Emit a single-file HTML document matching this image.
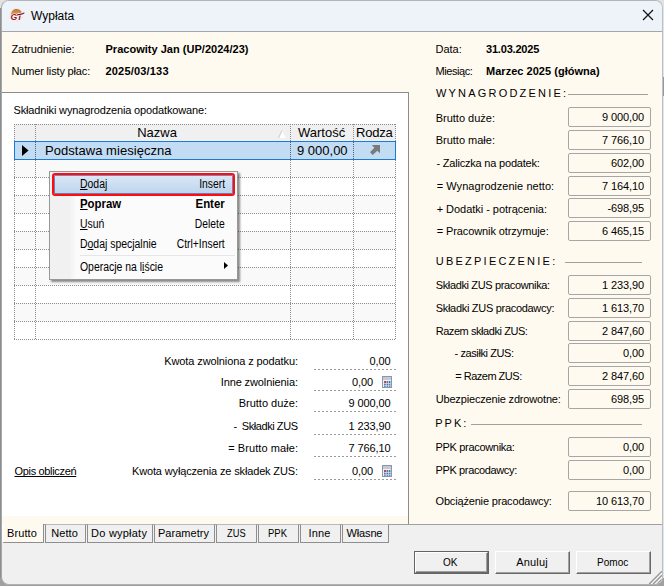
<!DOCTYPE html>
<html lang="pl">
<head>
<meta charset="utf-8">
<title>Wypłata</title>
<style>
*{box-sizing:border-box;margin:0;padding:0}
html,body{width:664px;height:586px;overflow:hidden}
body{position:relative;background:#a0a0a0;font-family:"Liberation Sans",sans-serif;font-size:11px;color:#000}
.abs{position:absolute}
#win{left:1px;top:0;width:662px;height:585px;background:#f0f0f0;border:1px solid #a8a8a8;border-top-color:#b4b4b4;border-right-color:#bcc0c5;border-bottom-color:#b0b0b0;border-radius:8px;overflow:hidden}
#c{left:-2px;top:-1px;width:664px;height:586px}
.t{position:absolute;white-space:pre;line-height:13px;font-size:11px;letter-spacing:-0.1px}
.b{font-weight:bold;letter-spacing:0}
.r{text-align:right}
.gf{font-size:13px;line-height:15px;position:absolute;white-space:nowrap}
.hl{position:absolute;left:14px;width:382px;height:1px;background-image:repeating-linear-gradient(90deg,#8c8c8c 0 1px,transparent 1px 2px)}
.vl{position:absolute;top:124px;width:1px;height:216px;background-image:repeating-linear-gradient(180deg,#8c8c8c 0 1px,transparent 1px 2px)}
.vf{position:absolute;left:314px;width:82px;height:1px;background-image:repeating-linear-gradient(90deg,#9a9a9a 0 2px,transparent 2px 4px)}
.fld{position:absolute;left:568px;width:83px;height:20px;border:1px solid #a6a6a6;border-radius:2px;background:#fffaef;font-size:11px;line-height:18px;text-align:right;padding-right:6px;white-space:nowrap;letter-spacing:-0.1px}
.sep{position:absolute;height:1px;background:#a0a0a0}
.tab{position:absolute;top:524px;height:19px;border:1px solid #8e8e8e;border-top-color:#b9b9b9;background:#f0f0f0;font-size:11px;line-height:16px;text-align:center;white-space:nowrap;letter-spacing:-0.1px}
.btn{position:absolute;top:551px;width:75px;height:23px;background:#f0f0f0;border-top:1px solid #fff;border-left:1px solid #fff;border-right:1px solid #696969;border-bottom:1px solid #696969;box-shadow:inset -1px -1px 0 #a0a0a0;font-size:11px;line-height:20px;text-align:center;letter-spacing:-0.1px}
#menu{left:49px;top:171px;width:189px;height:109px;background:#fbfbfb;border:1px solid #979797;box-shadow:2px 2px 2px rgba(0,0,0,.45)}
.mi{position:absolute;left:30px;font-size:12px;line-height:14px;white-space:nowrap;transform:scaleX(.87);transform-origin:0 50%}
.ms{position:absolute;right:12px;font-size:12px;line-height:14px;white-space:nowrap;text-align:right;transform:scaleX(.86);transform-origin:100% 50%}
.mi.b,.ms.b{transform:scaleX(.95)}
u{text-decoration:underline;text-underline-offset:1px;text-decoration-skip-ink:none}
</style>
</head>
<body>
<div class="abs" style="left:0;top:0;width:664px;height:14px;background:#e2e2e2"></div>
<div class="abs" style="left:0;top:8px;width:2px;height:570px;background:#8c8e92"></div>
<div class="abs" style="left:662px;top:8px;width:2px;height:570px;background:#dfe5ec"></div>
<div class="abs" style="left:662px;top:77px;width:2px;height:19px;background:#8e9aa8"></div>
<div class="abs" id="win"><div class="abs" id="c">

<div class="abs" style="left:2px;top:1px;width:660px;height:30px;background:#eef3f9"></div>
<div class="abs" style="left:2px;top:31px;width:660px;height:1px;background:#a6a6a6"></div>
<svg class="abs" style="left:8px;top:5px" width="19" height="19" viewBox="0 0 19 19">
<defs><linearGradient id="og" x1="0" y1="0" x2="0" y2="1"><stop offset="0" stop-color="#c2742f"/><stop offset="1" stop-color="#dfa268"/></linearGradient></defs>
<circle cx="8.2" cy="9.9" r="7.1" fill="#ebe6e1" opacity=".7"/>
<path d="M2.9 10.7 C2.8 6.2 5.4 3.9 8.3 3.9 C11 3.9 13.3 5.4 13.8 7.6 Z" fill="url(#og)"/>
<g font-family="Liberation Sans, sans-serif" font-size="8.6" font-weight="bold" font-style="italic" letter-spacing="-0.3">
<text x="2.6" y="14.9" fill="none" stroke="#fff" stroke-width="1.2" stroke-linejoin="round">GT</text>
<text x="2.6" y="14.9" fill="#8a1020">GT</text></g>
<path d="M9.6 9.8 L14.2 8.9 L16 7.9" stroke="#fff" stroke-width="2.2" fill="none" stroke-linecap="round"/>
<path d="M9.4 9.9 L14.2 8.9 L16 7.9" stroke="#8a1020" stroke-width="1.1" fill="none" stroke-linecap="round"/>
</svg>
<div class="abs" style="left:31px;top:9px;font-size:12px;line-height:14px;white-space:nowrap">Wypłata</div>
<svg class="abs" style="left:642px;top:9px" width="12" height="12" viewBox="0 0 12 12"><path d="M1 1 L11 11 M11 1 L1 11" stroke="#111" stroke-width="1.2" fill="none"/></svg>
<div class="abs" style="left:2px;top:32px;width:660px;height:492px;background:#fffaef"></div>
<div class="abs" style="left:662px;top:32px;width:1px;height:493px;background:#8c8c8c"></div>
<div class="abs" style="left:2px;top:92px;width:407px;height:432px;border-top:1px solid #8c8c8c;border-right:1px solid #8c8c8c"><div class="abs" style="left:0;top:0;width:406px;height:423px;background:#fff"></div></div>
<div class="abs" style="left:2px;top:524px;width:660px;height:1px;background:#a0a0a0"></div>
<div class="t" style="left:11.5px;top:43px;letter-spacing:-0.102px;">Zatrudnienie:</div>
<div class="t b" style="left:105.5px;top:43px;letter-spacing:0.021px;">Pracowity Jan (UP/2024/23)</div>
<div class="t" style="left:11.5px;top:65px;letter-spacing:-0.162px;">Numer listy płac:</div>
<div class="t b" style="left:105.5px;top:65px;letter-spacing:0.183px;">2025/03/133</div>
<div class="t" style="left:435.5px;top:43px;letter-spacing:-0.024px;">Data:</div>
<div class="t b" style="left:486px;top:43px;letter-spacing:-0.196px;">31.03.2025</div>
<div class="t" style="left:435.5px;top:65px;letter-spacing:-0.421px;">Miesiąc:</div>
<div class="t b" style="left:486px;top:65px;letter-spacing:0.027px;">Marzec 2025 (główna)</div>
<div class="t" style="left:13.5px;top:104px;letter-spacing:-0.146px;">Składniki wynagrodzenia opodatkowane:</div>
<div class="abs" style="left:14px;top:124px;width:382px;height:17px;background:#f0f0f0"></div>
<div class="abs" style="left:14px;top:159px;width:382px;height:18px;background:#f9f9f9"></div>
<div class="abs" style="left:14px;top:195px;width:382px;height:18px;background:#f9f9f9"></div>
<div class="abs" style="left:14px;top:231px;width:382px;height:18px;background:#f9f9f9"></div>
<div class="abs" style="left:14px;top:267px;width:382px;height:18px;background:#f9f9f9"></div>
<div class="abs" style="left:14px;top:303px;width:382px;height:18px;background:#f9f9f9"></div>
<div class="hl" style="top:124px"></div>
<div class="hl" style="top:177px"></div>
<div class="hl" style="top:195px"></div>
<div class="hl" style="top:213px"></div>
<div class="hl" style="top:231px"></div>
<div class="hl" style="top:249px"></div>
<div class="hl" style="top:267px"></div>
<div class="hl" style="top:285px"></div>
<div class="hl" style="top:303px"></div>
<div class="hl" style="top:321px"></div>
<div class="hl" style="top:339px"></div>
<div class="vl" style="left:14px"></div>
<div class="vl" style="left:35px"></div>
<div class="vl" style="left:290px"></div>
<div class="vl" style="left:353px"></div>
<div class="vl" style="left:395px"></div>
<div class="abs" style="left:14px;top:141px;width:382px;height:19px;background:#c2dcf4;border:1px solid #1a7ad4"></div>
<div class="abs" style="left:35px;top:142px;width:1px;height:17px;background-image:repeating-linear-gradient(180deg,#55606c 0 1px,transparent 1px 2px)"></div>
<div class="abs" style="left:290px;top:142px;width:1px;height:17px;background-image:repeating-linear-gradient(180deg,#55606c 0 1px,transparent 1px 2px)"></div>
<div class="abs" style="left:353px;top:142px;width:1px;height:17px;background-image:repeating-linear-gradient(180deg,#55606c 0 1px,transparent 1px 2px)"></div>
<div class="gf" style="left:36px;width:242px;top:125px;text-align:center">Nazwa</div>
<svg class="abs" style="left:278px;top:130px" width="8" height="8" viewBox="0 0 8 8"><path d="M0.5 8 L4 0.5 L7.5 8 Z" fill="#fff"/><path d="M0.5 8 L4 0.5" stroke="#c8c8c8" stroke-width="1" fill="none"/></svg>
<div class="gf" style="left:298px;top:125px;">Wartość</div>
<div class="gf" style="left:356px;top:125px;letter-spacing:-0.2px">Rodza</div>
<svg class="abs" style="left:22px;top:145px" width="7" height="11" viewBox="0 0 7 11"><path d="M0 0 L6.5 5.5 L0 11 Z" fill="#000"/></svg>
<div class="gf" style="left:45px;top:143px;letter-spacing:0.043px;">Podstawa miesięczna</div>
<div class="gf" style="left:297px;top:143px;">9 000,00</div>
<svg class="abs" style="left:370px;top:145px" width="10" height="10" viewBox="0 0 11 11"><path d="M2 0 H11 V9 L8 6.2 L3 11 L0 8 L4.8 3 Z" fill="#7a7a7a"/></svg>
<div class="t" style="left:164.3px;top:355px;letter-spacing:-0.107px;">Kwota zwolniona z podatku:</div>
<div class="t r" style="right:273.5px;top:355px;">0,00</div>
<div class="vf" style="top:369px"></div>
<div class="t" style="left:220.7px;top:376px;letter-spacing:-0.106px;">Inne zwolnienia:</div>
<div class="t r" style="right:291px;top:376px;">0,00</div>
<div class="vf" style="top:390px"></div>
<svg class="abs" style="left:382px;top:376px" width="10" height="12" viewBox="0 0 10 12"><rect x="0.5" y="0.5" width="9" height="11" fill="#eef1f5" stroke="#8a97a6"/><rect x="1" y="1" width="8" height="3" fill="#c3cad3"/><g fill="#4a78b4"><rect x="2" y="5" width="2" height="2" fill="#c8453a"/><rect x="4.5" y="5" width="1.7" height="2"/><rect x="6.8" y="5" width="1.7" height="2"/><rect x="2" y="7.6" width="1.7" height="1.6"/><rect x="4.5" y="7.6" width="1.7" height="1.6"/><rect x="6.8" y="7.6" width="1.7" height="1.6"/><rect x="2" y="9.6" width="1.7" height="1.2"/><rect x="4.5" y="9.6" width="1.7" height="1.2"/><rect x="6.8" y="9.6" width="1.7" height="1.2"/></g></svg>
<div class="t" style="left:238.7px;top:397px;letter-spacing:-0.003px;">Brutto duże:</div>
<div class="t r" style="right:273.5px;top:397px;">9 000,00</div>
<div class="vf" style="top:411px"></div>
<div class="t" style="left:233.4px;top:420px;letter-spacing:-0.438px;">-&nbsp; Składki ZUS</div>
<div class="t r" style="right:273.5px;top:420px;">1 233,90</div>
<div class="vf" style="top:434px"></div>
<div class="t" style="left:228.2px;top:442px;letter-spacing:0.077px;">= Brutto małe:</div>
<div class="t r" style="right:273.5px;top:442px;">7 766,10</div>
<div class="vf" style="top:456px"></div>
<div class="t" style="left:132px;top:465px;letter-spacing:-0.148px;">Kwota wyłączenia ze składek ZUS:</div>
<div class="t r" style="right:291px;top:465px;">0,00</div>
<div class="vf" style="top:479px"></div>
<svg class="abs" style="left:382px;top:465px" width="10" height="12" viewBox="0 0 10 12"><rect x="0.5" y="0.5" width="9" height="11" fill="#eef1f5" stroke="#8a97a6"/><rect x="1" y="1" width="8" height="3" fill="#c3cad3"/><g fill="#4a78b4"><rect x="2" y="5" width="2" height="2" fill="#c8453a"/><rect x="4.5" y="5" width="1.7" height="2"/><rect x="6.8" y="5" width="1.7" height="2"/><rect x="2" y="7.6" width="1.7" height="1.6"/><rect x="4.5" y="7.6" width="1.7" height="1.6"/><rect x="6.8" y="7.6" width="1.7" height="1.6"/><rect x="2" y="9.6" width="1.7" height="1.2"/><rect x="4.5" y="9.6" width="1.7" height="1.2"/><rect x="6.8" y="9.6" width="1.7" height="1.2"/></g></svg>
<div class="t" style="left:14.5px;top:465px;text-decoration:underline;text-decoration-skip-ink:none;letter-spacing:-0.329px;">Opis obliczeń</div>
<div class="t" style="left:436px;top:87px;letter-spacing:2.196px;">WYNAGRODZENIE:</div>
<div class="sep" style="left:568px;top:94px;width:80px"></div>
<div class="t" style="left:435.7px;top:112px;letter-spacing:-0.003px;">Brutto duże:</div>
<div class="fld" style="top:107px">9 000,00</div>
<div class="t" style="left:435.7px;top:134px;letter-spacing:-0.001px;">Brutto małe:</div>
<div class="fld" style="top:130px">7 766,10</div>
<div class="t" style="left:436.4px;top:157px;letter-spacing:-0.196px;">- Zaliczka na podatek:</div>
<div class="fld" style="top:153px">602,00</div>
<div class="t" style="left:436.7px;top:180px;letter-spacing:0.052px;">= Wynagrodzenie netto:</div>
<div class="fld" style="top:176px">7 164,10</div>
<div class="t" style="left:436.7px;top:203px;letter-spacing:-0.031px;">+ Dodatki - potrącenia:</div>
<div class="fld" style="top:198px">-698,95</div>
<div class="t" style="left:436.7px;top:225px;letter-spacing:-0.096px;">= Pracownik otrzymuje:</div>
<div class="fld" style="top:221px">6 465,15</div>
<div class="t" style="left:435.8px;top:255px;letter-spacing:2.225px;">UBEZPIECZENIE:</div>
<div class="sep" style="left:565px;top:262px;width:77px"></div>
<div class="t" style="left:435.7px;top:279px;letter-spacing:-0.354px;">Składki ZUS pracownika:</div>
<div class="fld" style="top:275px">1 233,90</div>
<div class="t" style="left:435.7px;top:302px;letter-spacing:-0.297px;">Składki ZUS pracodawcy:</div>
<div class="fld" style="top:298px">1 613,70</div>
<div class="t" style="left:435.7px;top:325px;letter-spacing:-0.438px;">Razem składki ZUS:</div>
<div class="fld" style="top:321px">2 847,60</div>
<div class="t" style="left:454.6px;top:347px;letter-spacing:-0.414px;">- zasiłki ZUS:</div>
<div class="fld" style="top:343px">0,00</div>
<div class="t" style="left:455.2px;top:370px;letter-spacing:-0.494px;">= Razem ZUS:</div>
<div class="fld" style="top:366px">2 847,60</div>
<div class="t" style="left:435.7px;top:393px;letter-spacing:-0.167px;">Ubezpieczenie zdrowotne:</div>
<div class="fld" style="top:389px">698,95</div>
<div class="t" style="left:435.3px;top:417px;letter-spacing:1.974px;">PPK:</div>
<div class="sep" style="left:471px;top:424px;width:171px"></div>
<div class="t" style="left:435.5px;top:441px;letter-spacing:-0.319px;">PPK pracownika:</div>
<div class="fld" style="top:437px">0,00</div>
<div class="t" style="left:435.5px;top:464px;letter-spacing:-0.366px;">PPK pracodawcy:</div>
<div class="fld" style="top:460px">0,00</div>
<div class="t" style="left:435.5px;top:495px;letter-spacing:-0.169px;">Obciążenie pracodawcy:</div>
<div class="fld" style="top:491px">10 613,70</div>
<div class="tab" style="left:2px;width:42px;top:524px;height:19px;background:#fffaef;border-top:none;border-left:2px solid #fff;line-height:18px;padding-right:3px"><span style="letter-spacing:0.088px;margin-right:-0.088px">Brutto</span></div>
<div class="tab" style="left:45px;width:41px;padding-right:2px"><span style="letter-spacing:0.051px;margin-right:-0.051px">Netto</span></div>
<div class="tab" style="left:87px;width:66px;padding-right:2px"><span style="letter-spacing:0.223px;margin-right:-0.223px">Do wypłaty</span></div>
<div class="tab" style="left:154px;width:61px;padding-right:2px"><span style="letter-spacing:0.031px;margin-right:-0.031px">Parametry</span></div>
<div class="tab" style="left:216px;width:41px;padding-right:0px"><span style="display:inline-block;width:18.6px"><span style="display:inline-block;transform:scaleX(0.845);transform-origin:0 50%;letter-spacing:0">ZUS</span></span></div>
<div class="tab" style="left:258px;width:41px;padding-right:2px"><span style="display:inline-block;width:19px"><span style="display:inline-block;transform:scaleX(0.863);transform-origin:0 50%;letter-spacing:0">PPK</span></span></div>
<div class="tab" style="left:300px;width:41px;padding-right:2px"><span style="letter-spacing:0.193px;margin-right:-0.193px">Inne</span></div>
<div class="tab" style="left:342px;width:47px;padding-right:2px"><span style="letter-spacing:-0.138px;margin-right:0.138px">Własne</span></div>
<div class="abs" style="left:414px;top:551px;width:75px;height:23px;background:#646464"></div>
<div class="btn" style="left:415px;top:552px;width:73px;height:21px;line-height:18px;padding-right:2px"><span style="display:inline-block;width:14.5px"><span style="display:inline-block;transform:scaleX(0.912);transform-origin:0 50%;letter-spacing:0">OK</span></span></div>
<div class="btn" style="left:495px;padding-right:1px"><span style="letter-spacing:0.164px;margin-right:-0.164px">Anuluj</span></div>
<div class="btn" style="left:576px;padding-right:1px"><span style="display:inline-block;width:31.3px"><span style="display:inline-block;transform:scaleX(0.914);transform-origin:0 50%;letter-spacing:0">Pomoc</span></span></div>
<svg class="abs" style="left:648px;top:570px" width="14" height="14" viewBox="0 0 14 14"><path d="M14 2.4 L2.4 14 M14 6.4 L6.4 14 M14 10.4 L10.4 14" stroke="#fff" stroke-width="1.1"/><path d="M14 1.2 L1.2 14 M14 5.2 L5.2 14 M14 9.2 L9.2 14" stroke="#9a9a9a" stroke-width="1.5"/></svg>
<div class="abs" id="menu">
<div class="abs" style="left:0;top:0;width:26px;height:107px;background:linear-gradient(90deg,#f1f1f1 0,#f1f1f1 75%,#fbfbfb 100%)"></div>
<div class="abs" style="left:2px;top:1px;width:183px;height:23px;border:2px solid #fb0d10;border-radius:3px;background:linear-gradient(180deg,#dbe8f6,#bdd4ec);box-shadow:inset 0 0 0 1px rgba(70,40,120,.55)"></div>
<div class="mi" style="top:5px"><u>D</u>odaj</div><div class="ms" style="top:5px">Insert</div>
<div class="mi b" style="top:25px"><u>P</u>opraw</div><div class="ms b" style="top:25px">Enter</div>
<div class="mi" style="top:45px"><u>U</u>suń</div><div class="ms" style="top:45px">Delete</div>
<div class="mi" style="top:65px">D<u>o</u>daj specjalnie</div><div class="ms" style="top:65px">Ctrl+Insert</div>
<div class="abs" style="left:30px;top:83px;width:155px;height:1px;background:#e6e6e6"></div>
<div class="mi" style="top:88px">Operacje na l<u>i</u>ście</div>
<svg class="abs" style="left:174px;top:90px" width="4" height="7" viewBox="0 0 4 7"><path d="M0 0 L4 3.5 L0 7 Z" fill="#000"/></svg>
</div>
</div></div>
</body>
</html>
